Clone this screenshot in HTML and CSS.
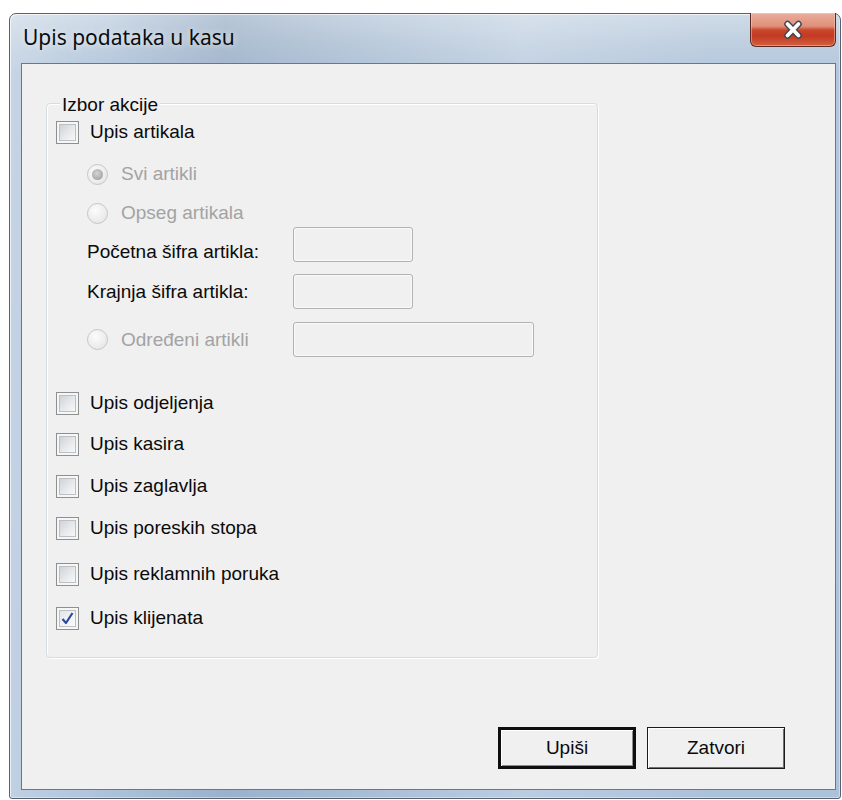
FILE: index.html
```html
<!DOCTYPE html>
<html lang="sr">
<head>
<meta charset="utf-8">
<title>Upis podataka u kasu</title>
<link rel="stylesheet" href="styles.css">
</head>
<body>
<div class="window">
  <div class="titlebar">
    <span class="title">Upis podataka u kasu</span>
    <button class="close" type="button" aria-label="Zatvori">
      <svg width="26" height="22" viewBox="0 0 26 22">
        <path d="M7.5 5 L18.5 16.5 M18.5 5 L7.5 16.5" stroke="#3e4651" stroke-width="6.5" stroke-linecap="round"/>
        <path d="M7.5 5 L18.5 16.5 M18.5 5 L7.5 16.5" stroke="#ffffff" stroke-width="3.8" stroke-linecap="round"/>
      </svg>
    </button>
  </div>

  <div class="client">
    <div class="group">
      <span class="legend">Izbor akcije</span>

      <div class="opt"><span class="chk"></span>Upis artikala</div>

      <div class="sub">
        <div class="opt disabled"><span class="radio selected"></span>Svi artikli</div>
        <div class="opt disabled sub-opseg"><span class="radio"></span>Opseg artikala</div>
        <div class="field sub-start">
          <span class="field-label label-low">Početna šifra artikla:</span>
          <span class="textbox"></span>
        </div>
        <div class="field sub-end">
          <span class="field-label">Krajnja šifra artikla:</span>
          <span class="textbox"></span>
        </div>
        <div class="field sub-pick">
          <span class="field-label disabled"><span class="radio"></span>Određeni artikli</span>
          <span class="textbox textbox-wide"></span>
        </div>
      </div>

      <div class="list">
        <div class="opt"><span class="chk"></span>Upis odjeljenja</div>
        <div class="opt list-tight"><span class="chk"></span>Upis kasira</div>
        <div class="opt"><span class="chk"></span>Upis zaglavlja</div>
        <div class="opt"><span class="chk"></span>Upis poreskih stopa</div>
        <div class="opt list-wide"><span class="chk"></span>Upis reklamnih poruka</div>
        <div class="opt list-last"><span class="chk checked">
          <svg width="15" height="15" viewBox="0 0 15 15">
            <path d="M2.5 8 L6 12 L12.5 2" fill="none" stroke="#2c4a9e" stroke-width="2.2" stroke-linejoin="round"/>
          </svg>
        </span>Upis klijenata</div>
      </div>
    </div>

    <div class="buttons">
      <button class="btn btn-default" type="button">Upiši</button>
      <button class="btn" type="button">Zatvori</button>
    </div>
  </div>
</div>
</body>
</html>
```

FILE: styles.css
```css
html, body {
  margin: 0;
  padding: 0;
  background: #ffffff;
}

body {
  font-family: "Liberation Sans", Arial, sans-serif;
  font-size: 19px;
  color: #0a0a0a;
}

/* window frame (glass-like border) */
.window {
  margin: 13px 0 0 9px;
  width: 832px;
  height: 786px;
  box-sizing: border-box;
  border: 1px solid #56626f;
  border-radius: 7px 7px 3px 3px;
  padding: 0 4px 8px 11px;
  display: flex;
  flex-direction: column;
  box-shadow: inset 1px 1px 0 rgba(255, 255, 255, 0.7), inset -1px -1px 0 rgba(255, 255, 255, 0.4);
  background:
    linear-gradient(90deg, rgba(255, 255, 255, 0.25) 0, rgba(255, 255, 255, 0) 12%, rgba(70, 95, 125, 0.16) 26%, rgba(70, 95, 125, 0.06) 40%, rgba(255, 255, 255, 0.18) 62%, rgba(255, 255, 255, 0) 85%),
    linear-gradient(180deg, #cfdbe8 0, #bfcfe0 30px, #b3c6dc 60px, #acc1da 100%);
}

.titlebar {
  height: 49px;
  display: flex;
  align-items: flex-start;
  justify-content: space-between;
}

.title {
  font-family: "Noto Sans", "Open Sans", sans-serif;
  font-size: 21px;
  line-height: 28px;
  padding: 9px 0 0 2px;
  color: #0c0c0c;
  text-shadow: 0 0 6px rgba(255, 255, 255, 0.8);
}

.close {
  width: 86px;
  height: 34px;
  margin-top: -1px;
  padding: 0;
  border: 1px solid #5a2a22;
  border-top: none;
  border-radius: 0 0 6px 6px;
  display: flex;
  align-items: center;
  justify-content: center;
  box-shadow: inset 0 0 0 1px rgba(255, 215, 200, 0.45);
  background: linear-gradient(180deg, #e9ae9d 0, #e08f79 40%, #c9452b 52%, #c23b22 70%, #d4603f 100%);
}

/* client area */
.client {
  flex: 1;
  border: 1px solid #6c7784;
  background: #f0f0f0;
  display: flex;
  flex-direction: column;
}

.group {
  position: relative;
  margin: 39px 0 0 24px;
  width: 552px;
  height: 555px;
  box-sizing: border-box;
  border: 1px solid #d3dde4;
  border-radius: 4px;
  box-shadow: inset 1px 1px 0 #ffffff, 1px 1px 0 #ffffff;
  padding: 16px 0 0 9px;
}

.legend {
  position: absolute;
  top: -10px;
  left: 13px;
  line-height: 22px;
  padding: 0 2px;
  background: #f0f0f0;
}

.opt {
  display: flex;
  align-items: center;
  height: 24px;
  white-space: nowrap;
}

.disabled {
  color: #a3a3a3;
}

/* checkbox */
.chk {
  position: relative;
  width: 23px;
  height: 23px;
  box-sizing: border-box;
  margin-right: 11px;
  border: 1px solid #8e8f8f;
  background: #f6f6f6;
  display: flex;
  align-items: center;
  justify-content: center;
}

.chk::before {
  content: "";
  position: absolute;
  inset: 2px;
  border: 1px solid #bcc0c5;
  background: linear-gradient(135deg, #cfd3d8 0, #e7e9eb 55%, #f8f8f8 100%);
}

.chk svg {
  position: relative;
}

.checked::before {
  background: linear-gradient(135deg, #e2e4e7 0, #f3f4f5 60%, #fbfbfb 100%);
}

/* radio button (disabled look) */
.radio {
  position: relative;
  width: 21px;
  height: 21px;
  box-sizing: border-box;
  margin-right: 13px;
  border: 1px solid #c6c6c6;
  border-radius: 50%;
  background: radial-gradient(circle at 40% 35%, #fcfcfc 0, #ececec 60%, #e0e0e0 100%);
  flex: none;
}

.selected::after {
  content: "";
  position: absolute;
  inset: 4px;
  border-radius: 50%;
  background: radial-gradient(circle at 45% 40%, #d4d4d4 0, #a9a9a9 70%, #9a9a9a 100%);
}

/* article range options */
.sub {
  margin-top: 18px;
  padding-left: 31px;
}

.sub-opseg {
  margin-top: 15px;
}

.field {
  display: flex;
  align-items: center;
  height: 35px;
}

.sub-start {
  margin-top: 2px;
}

.sub-end {
  margin-top: 12px;
}

.sub-pick {
  margin-top: 13px;
}

.field-label {
  width: 206px;
  display: flex;
  align-items: center;
  white-space: nowrap;
}

.label-low {
  padding-top: 14px;
}

.textbox {
  width: 120px;
  height: 35px;
  box-sizing: border-box;
  border: 1px solid #b2b2b2;
  border-radius: 3px;
  background: #f0f0f0;
  box-shadow: inset 0 0 0 1px #f9f9f9;
}

.textbox-wide {
  width: 241px;
}

/* remaining actions */
.list {
  margin-top: 34px;
  display: flex;
  flex-direction: column;
  gap: 18px;
}

.list-tight {
  margin-top: -1px;
}

.list-wide {
  margin-top: 4px;
}

.list-last {
  margin-top: 2px;
}

/* dialog buttons */
.buttons {
  margin-top: auto;
  display: flex;
  justify-content: flex-end;
  gap: 11px;
  padding: 0 50px 20px 0;
}

.btn {
  width: 138px;
  height: 42px;
  padding: 0;
  font-family: "Liberation Sans", Arial, sans-serif;
  font-size: 19px;
  color: #0a0a0a;
  background: #f0f0f0;
  border: 1px solid #1c1c1c;
  box-shadow: inset 1px 1px 0 #ffffff, inset -1px -1px 0 #707070;
}

.btn-default {
  border: 3px solid #0e0e0e;
  box-shadow: inset 1px 1px 0 #ffffff, inset -1px -1px 0 #8c8c8c;
}
```
